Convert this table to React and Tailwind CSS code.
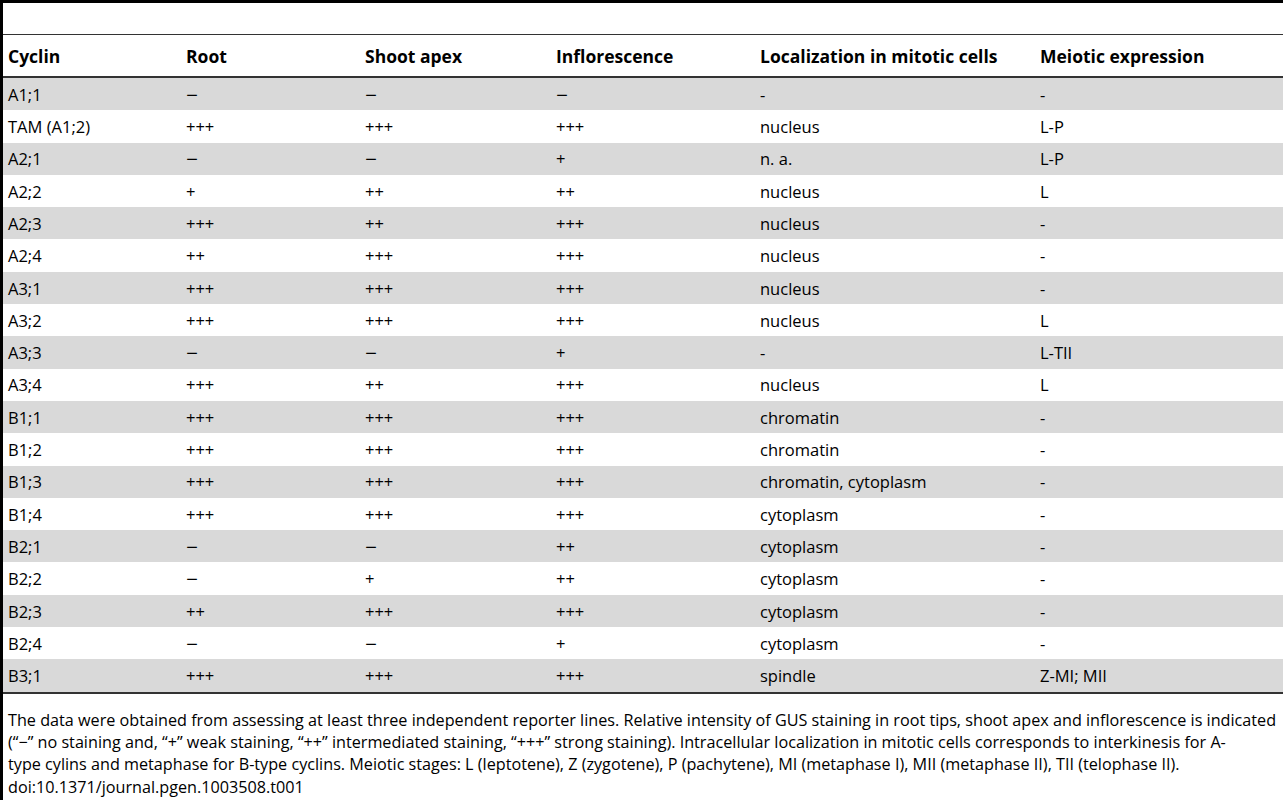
const rows = [
  ['A1;1', '−', '−', '−', '-', '-'],
  ['TAM (A1;2)', '+++', '+++', '+++', 'nucleus', 'L-P'],
  ['A2;1', '−', '−', '+', 'n. a.', 'L-P'],
  ['A2;2', '+', '++', '++', 'nucleus', 'L'],
  ['A2;3', '+++', '++', '+++', 'nucleus', '-'],
  ['A2;4', '++', '+++', '+++', 'nucleus', '-'],
  ['A3;1', '+++', '+++', '+++', 'nucleus', '-'],
  ['A3;2', '+++', '+++', '+++', 'nucleus', 'L'],
  ['A3;3', '−', '−', '+', '-', 'L-TII'],
  ['A3;4', '+++', '++', '+++', 'nucleus', 'L'],
  ['B1;1', '+++', '+++', '+++', 'chromatin', '-'],
  ['B1;2', '+++', '+++', '+++', 'chromatin', '-'],
  ['B1;3', '+++', '+++', '+++', 'chromatin, cytoplasm', '-'],
  ['B1;4', '+++', '+++', '+++', 'cytoplasm', '-'],
  ['B2;1', '−', '−', '++', 'cytoplasm', '-'],
  ['B2;2', '−', '+', '++', 'cytoplasm', '-'],
  ['B2;3', '++', '+++', '+++', 'cytoplasm', '-'],
  ['B2;4', '−', '−', '+', 'cytoplasm', '-'],
  ['B3;1', '+++', '+++', '+++', 'spindle', 'Z-MI; MII'],
];

const headers = ['Cyclin', 'Root', 'Shoot apex', 'Inflorescence', 'Localization in mitotic cells', 'Meiotic expression'];

const grid = 'grid grid-cols-[186px_179px_191px_204px_280px_1fr] items-center';

export default function App() {
  return (
    <div className="w-[1283px] h-[800px] overflow-hidden bg-white text-black border-l-[3px] border-black font-['Open_Sans',sans-serif] text-[16.5px]">
      <div className="h-[3px] bg-black" />
      <div className="h-[31px]" />
      {/* header */}
      <div className={`${grid} h-[44px] pt-[2px] border-t border-[#333] border-b-2 font-bold text-[17.5px]`}>
        {headers.map((h, i) => (
          <div key={h} className={i === 0 ? 'pl-[5px]' : '-ml-[3px]'}>{h}</div>
        ))}
      </div>
      {/* body */}
      <div className="border-b-2 border-[#333]">
        {rows.map((r, ri) => (
          <div key={r[0]} className={`${grid} h-[32.3px] pt-[2px] ${ri % 2 === 0 ? 'bg-[#d9d9d9]' : 'bg-white'}`}>
            {r.map((c, i) => (
              <div key={i} className={`whitespace-pre ${i === 0 ? 'pl-[5px]' : '-ml-[3px]'}`}>
                {c === '−' ? <span className="inline-block scale-x-125 origin-left">−</span> : c}
              </div>
            ))}
          </div>
        ))}
      </div>
      {/* footnote */}
      <div className="pl-[5px] pt-[15px] text-[16.2px] leading-[22.3px] whitespace-nowrap">
        <div>The data were obtained from assessing at least three independent reporter lines. Relative intensity of GUS staining in root tips, shoot apex and inflorescence is indicated</div>
        <div>(“−” no staining and, “+” weak staining, “++” intermediated staining, “+++” strong staining). Intracellular localization in mitotic cells corresponds to interkinesis for A-</div>
        <div>type cylins and metaphase for B-type cyclins. Meiotic stages: L (leptotene), Z (zygotene), P (pachytene), MI (metaphase I), MII (metaphase II), TII (telophase II).</div>
        <div>doi:10.1371/journal.pgen.1003508.t001</div>
      </div>
    </div>
  );
}
